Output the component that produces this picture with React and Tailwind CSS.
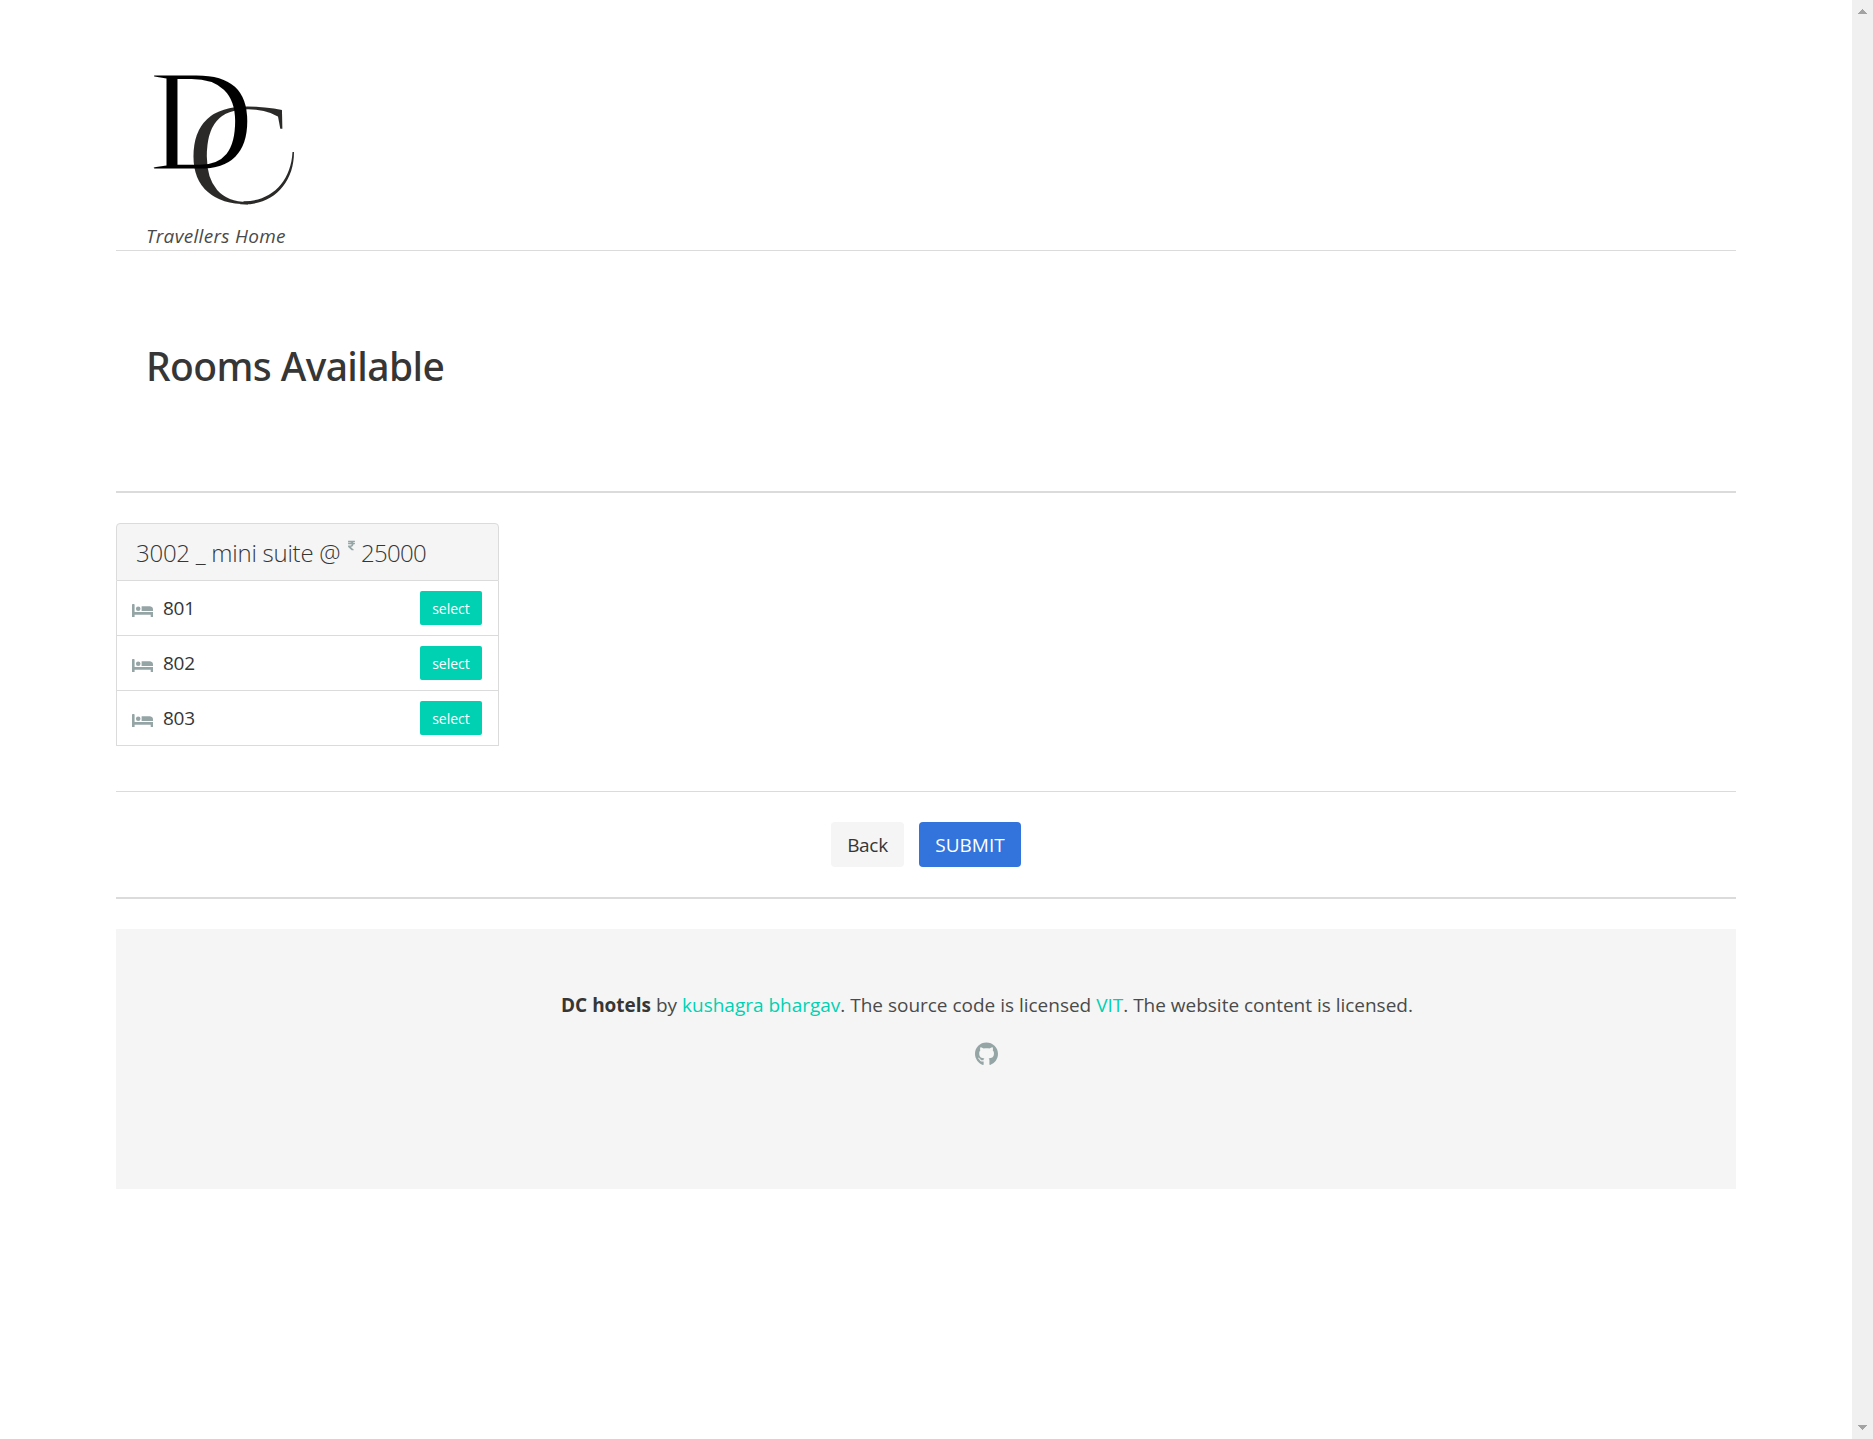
import { FaGithub, FaRupeeSign } from "react-icons/fa";

const rooms = ["801", "802", "803"];

function Logo() {
  return (
    <svg
      width="150"
      height="150"
      viewBox="0 0 150 150"
      role="img"
      aria-label="DC"
      className="ml-[1px] block font-['Liberation_Serif',serif]"
    >
      <defs>
        <mask id="thin-d" maskUnits="userSpaceOnUse" x="0" y="0" width="150" height="150">
          <text transform="translate(1.5 107.6) scale(1.035 1.03)" fontSize="142" fill="#fff" stroke="#000" strokeWidth="2.8">D</text>
        </mask>
        <mask id="thin-c" maskUnits="userSpaceOnUse" x="0" y="0" width="150" height="150">
          <text transform="translate(38 143) scale(1.16 1.055)" fontSize="142" fill="#fff" stroke="#000" strokeWidth="3">C</text>
          <rect x="101" y="80" width="49" height="70" fill="#000" />
        </mask>
      </defs>
      <rect width="150" height="150" fill="#2b2a29" mask="url(#thin-c)" />
      {/* tapering flourish at the lower right of the monogram */}
      <path d="M93 142.2C125 144.4 147 122 147 90L145.5 90C144 120 124 139.4 97 139.2Z" fill="#2b2a29" />
      <rect width="150" height="150" fill="#000" mask="url(#thin-d)" />
    </svg>
  );
}

function BedIcon() {
  return (
    <svg width="22" height="14" viewBox="0 0 22 14" fill="#95a5a6" className="mt-[5px]">
      <path d="M0 0.8Q0 0 0.8 0H1.9Q2.6 0 2.6 0.8V8H21V13H18.7V10.7H2.6V13H0Z" />
      <circle cx="6.2" cy="4.8" r="2.3" />
      <path d="M9.6 2.3H18Q21 2.8 21 5.5V7H9.6Z" />
    </svg>
  );
}

function Room({ number }) {
  return (
    <li className="flex h-[55px] items-center border-x border-b border-[#dbdbdb] pr-4 pl-[15px]">
      <BedIcon />
      <span className="ml-[9px] text-[19px] leading-[30px] tracking-[-0.3px] text-[#363636]">{number}</span>
      <button className="ml-auto h-[34px] w-[62px] rounded-[2px] bg-[#00d1b2] text-[14px] text-white">select</button>
    </li>
  );
}

function Scrollbar() {
  return (
    <aside className="flex w-[21px] shrink-0 flex-col items-center justify-between bg-[#f0f0f0] py-[9px]">
      <svg width="9" height="5" viewBox="0 0 9 5" fill="#a3a3a3" shapeRendering="crispEdges">
        <path d="M0 5L4.5 0L9 5Z" />
      </svg>
      <svg width="9" height="5" viewBox="0 0 9 5" fill="#a3a3a3" shapeRendering="crispEdges">
        <path d="M0 0L4.5 5L9 0Z" />
      </svg>
    </aside>
  );
}

export default function App() {
  return (
    <div className="flex h-[1439px] bg-white font-['Open_Sans','Noto_Sans',sans-serif] text-[19px] text-[#4a4a4a]">
      <div className="flex-1">
        <main className="mx-auto w-[1620px]">
          <header className="h-[251px] border-b border-[#dbdbdb] pt-[62px] pl-[30px]">
            <Logo />
            <p className="mt-[9px] leading-[30px] tracking-[0.3px] italic">Travellers Home</p>
          </header>

          <section className="flex h-[240px] items-center pl-[30px]">
            <h1 className="-mt-[12px] font-['Noto_Sans',sans-serif] text-[39px] leading-[45px] font-medium tracking-[-0.6px] text-[#363636]">
              Rooms Available
            </h1>
          </section>
          <hr className="h-[2px] border-0 bg-[#dbdbdb]" />

          <nav className="mt-[30px] w-[383px]">
            <h2 className="flex h-[58px] items-center rounded-t-[4px] border border-[#dbdbdb] bg-[#f5f5f5] pt-px pl-[19px] text-[24px] leading-[30px] font-light text-[#363636]">
              <span className="w-[212px] tracking-[-0.25px] whitespace-nowrap">3002 _ mini suite @</span>
              <FaRupeeSign className="-mt-[15px] h-[11px] w-[7px] text-[#95a5a6]" />
              <span className="ml-[6px] tracking-[-0.7px]">25000</span>
            </h2>
            <ul>
              {rooms.map((number) => (
                <Room key={number} number={number} />
              ))}
            </ul>
          </nav>

          <hr className="mt-[45px] h-px border-0 bg-[#dbdbdb]" />
          <div className="flex h-[105px] items-center justify-center gap-[15px]">
            <button className="h-[45px] w-[73px] rounded-[4px] bg-[#f5f5f5] pt-px tracking-[-0.3px] text-[#363636]">Back</button>
            <button className="h-[45px] w-[102px] rounded-[4px] bg-[#3273dc] pt-px text-white">SUBMIT</button>
          </div>
          <hr className="h-[2px] border-0 bg-[#dbdbdb]" />

          <footer className="mt-[30px] flex h-[260px] flex-col items-center bg-[#f5f5f5] pt-[61px] pl-[120px]">
            <p className="pl-[2px] leading-[30px] tracking-[-0.01px] whitespace-nowrap">
              <strong className="font-bold text-[#363636]">DC hotels</strong> by{" "}
              <a className="text-[#00d1b2]">kushagra bhargav</a>. The source code is licensed{" "}
              <a className="text-[#00d1b2]">VIT</a>. The website content is licensed.
            </p>
            <FaGithub className="mt-[22px] h-[24px] w-[23px] text-[#95a5a6]" />
          </footer>
        </main>
      </div>
      <Scrollbar />
    </div>
  );
}
